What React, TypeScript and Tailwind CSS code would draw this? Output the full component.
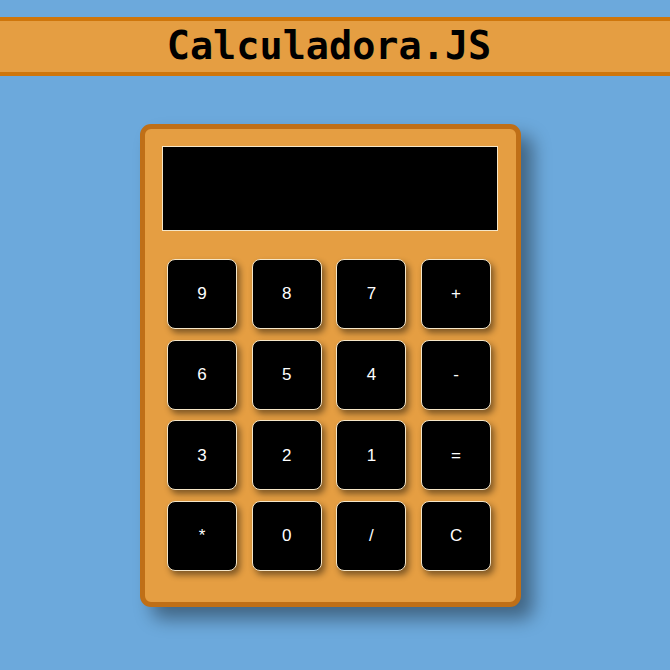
import React from "react";

const keys = ["9", "8", "7", "+", "6", "5", "4", "-", "3", "2", "1", "=", "*", "0", "/", "C"];

const Key: React.FC<{ label: string }> = ({ label }) => (
  <button className="flex h-[70px] w-[70px] items-center justify-center rounded-[8px] border border-[#f5e6c8] bg-black font-['Liberation_Sans',Arial,sans-serif] text-[17px] text-white shadow-[3px_4px_6px_rgba(0,0,0,0.45)]">
    {label}
  </button>
);

export default function App() {
  return (
    <div className="min-h-[670px] w-full bg-[#6ca9dc] pt-[17px]">
      {/* Header */}
      <div className="flex h-[59px] items-center justify-center border-y-4 border-[#cf760b] bg-[#e59e42] pr-[12px]">
        <h1 className="font-['DejaVu_Sans_Mono',monospace] text-[38.5px] font-bold leading-none text-black">
          Calculadora.JS
        </h1>
      </div>

      {/* Calculator */}
      <div className="mt-[48px] flex justify-center">
        <div className="ml-[-9px] w-[381px] rounded-[11px] border-[5px] border-[#bf6f17] bg-[#e59e42] px-[17px] pb-[31px] pt-[17px] shadow-[12px_12px_18px_rgba(0,0,0,0.4)]">
          <div className="h-[85px] w-[336px] border border-[#f5e6c8] bg-black" />
          <div className="ml-[5px] mt-[28px] grid w-[324px] grid-cols-[repeat(4,70px)] gap-x-[14.7px] gap-y-[10.7px]">
            {keys.map((k) => (
              <Key key={k} label={k} />
            ))}
          </div>
        </div>
      </div>
    </div>
  );
}
